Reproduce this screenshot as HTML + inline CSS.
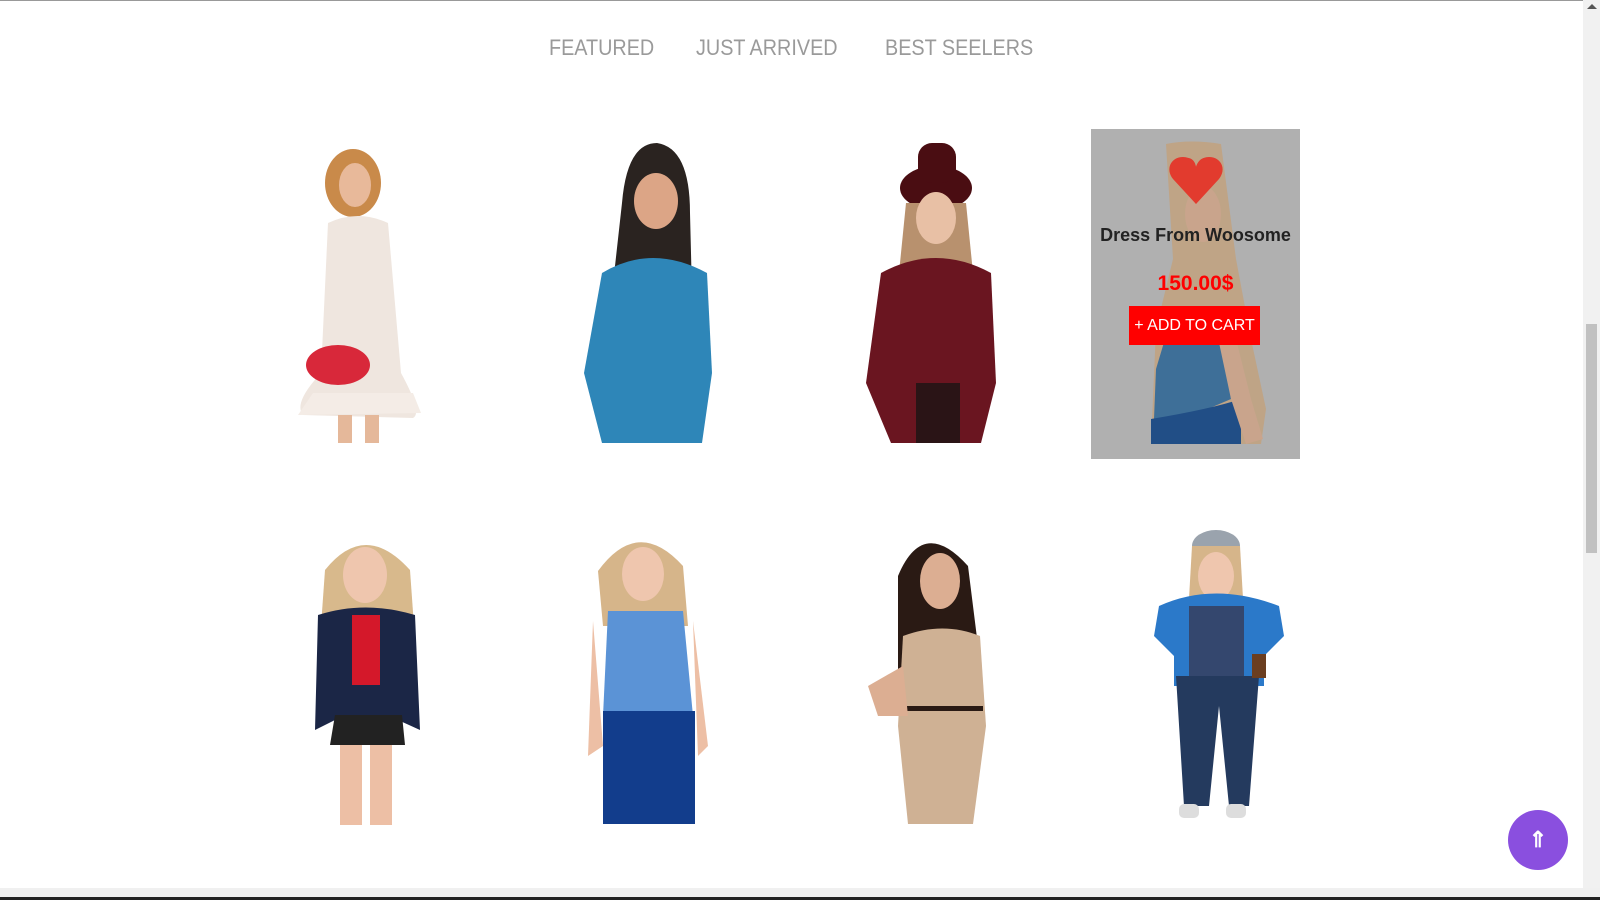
<!DOCTYPE html>
<html><head><meta charset="utf-8"><style>
html,body{margin:0;padding:0;width:1600px;height:900px;overflow:hidden;background:#fff;font-family:"Liberation Sans",sans-serif}
.top{position:absolute;left:0;top:0;width:1583px;height:1px;background:#999}
.tab{position:absolute;top:35px;font-size:22px;color:#9a9a9a;transform:scaleX(0.9);transform-origin:left top;white-space:nowrap}
.fig{position:absolute}
.card{position:absolute;left:1091px;top:129px;width:209px;height:330px;background:#b0b0b0;overflow:hidden}
.card svg{position:absolute;left:0;top:0}
.t{position:absolute;width:100%;text-align:center}
.sb{position:absolute;left:1583px;top:0;width:17px;height:888px;background:#f1f1f1}
.th{position:absolute;left:1586px;top:324px;width:11px;height:229px;background:#c1c1c1}
.hb{position:absolute;left:0;top:888px;width:1600px;height:9px;background:#f0f0f0}
.db{position:absolute;left:0;top:897px;width:1600px;height:3px;background:#222}
.up{position:absolute;left:1508px;top:810px;width:60px;height:60px;border-radius:50%;background:#8a4fdf;color:#fff;font-size:22px;text-align:center;line-height:60px;font-weight:bold}
</style></head><body>
<div class="top"></div>
<div class="tab" style="left:549px">FEATURED</div>
<div class="tab" style="left:696px">JUST ARRIVED</div>
<div class="tab" style="left:885px">BEST SEELERS</div>

<!-- row 1 -->
<svg class="fig" style="left:293px;top:143px" width="140" height="300">
<ellipse cx="60" cy="40" rx="28" ry="34" fill="#c98a4a"/><ellipse cx="62" cy="42" rx="16" ry="22" fill="#e8b99a"/>
<path d="M35 80 Q65 66 95 80 L108 230 Q130 270 120 275 L10 272 Q0 260 28 230 Z" fill="#efe6df"/>
<path d="M20 250 L120 250 L128 270 L5 272Z" fill="#f4ece6"/>
<ellipse cx="45" cy="222" rx="32" ry="20" fill="#d8283a"/>
<rect x="45" y="272" width="14" height="28" fill="#e5b89a"/><rect x="72" y="272" width="14" height="28" fill="#e5b89a"/>
</svg>
<svg class="fig" style="left:582px;top:143px" width="140" height="300">
<path d="M40 60 Q45 0 75 0 Q108 5 108 70 L110 150 L30 150Z" fill="#2a2320"/>
<ellipse cx="74" cy="58" rx="22" ry="28" fill="#dca586"/>
<path d="M20 130 Q70 100 125 130 L130 230 L120 300 L20 300 L2 230Z" fill="#2e86b8"/>
</svg>
<svg class="fig" style="left:866px;top:143px" width="140" height="300">
<ellipse cx="70" cy="45" rx="36" ry="22" fill="#4a0d12"/><rect x="52" y="0" width="38" height="40" rx="14" fill="#4a0d12"/>
<path d="M40 60 L100 60 L108 140 L32 140Z" fill="#b8916e"/><ellipse cx="70" cy="75" rx="20" ry="26" fill="#e8c0a5"/>
<path d="M15 130 Q70 100 125 130 L130 240 L115 300 L25 300 L0 240Z" fill="#6a1520"/>
<rect x="50" y="240" width="44" height="60" fill="#2a1416"/>
</svg>

<div class="card">
<svg width="209" height="330">
<path d="M75 15 Q100 10 130 15 L145 130 L160 210 L175 280 L170 315 L60 315 L65 200 L82 130Z" fill="#bfa486"/>
<ellipse cx="112" cy="85" rx="18" ry="28" fill="#c9a48c"/>
<path d="M80 190 Q100 175 130 190 L140 270 L70 300 L62 315 L65 240Z" fill="#3e6f98"/>
<path d="M60 290 Q120 280 150 270 L150 315 L60 315Z" fill="#214e86"/>
<path d="M123 190 L145 210 L160 270 L172 310 L155 315 L140 270Z" fill="#c9a48c"/>
<path d="M91 52 C77 26 108 20 105 44 C104 20 133 26 119 52 L105 75Z" fill="#e23b2e"/>
<path d="M105 75 L82 50 C74 40 80 28 92 28 C100 28 104 34 105 38 C106 34 110 28 118 28 C130 28 136 40 128 50 Z" fill="#e23b2e"/>
</svg>
<div class="t" style="top:96px;font-size:18px;font-weight:bold;color:#222">Dress From Woosome</div>
<div class="t" style="top:143px;font-size:21px;font-weight:bold;color:#f00">150.00$</div>
<div style="position:absolute;left:38px;top:177px;width:131px;height:39px;background:#f00;color:#fff;font-size:16px;line-height:39px;text-align:center">+ ADD TO CART</div>
</div>

<!-- row 2 -->
<svg class="fig" style="left:310px;top:530px" width="115" height="295">
<path d="M15 40 Q55 -10 100 40 L105 110 L10 110Z" fill="#d8b98c"/><ellipse cx="55" cy="45" rx="22" ry="28" fill="#efc6ae"/>
<path d="M8 85 Q55 70 105 85 L110 200 L88 190 L25 190 L5 200Z" fill="#1b2646"/>
<rect x="42" y="85" width="28" height="70" fill="#d4182a"/>
<path d="M25 185 L92 185 L95 215 L20 215Z" fill="#222"/>
<rect x="30" y="215" width="22" height="80" fill="#edbfa5"/><rect x="60" y="215" width="22" height="80" fill="#edbfa5"/>
</svg>
<svg class="fig" style="left:583px;top:526px" width="135" height="298">
<path d="M15 45 Q55 -10 100 40 L105 100 L20 100Z" fill="#d6b58a"/><ellipse cx="60" cy="48" rx="21" ry="27" fill="#efc6ae"/>
<path d="M10 95 L20 220 L5 230 Z" fill="#edbfa5"/><path d="M110 95 L125 220 L115 230Z" fill="#edbfa5"/>
<path d="M25 85 L100 85 L110 190 L20 190Z" fill="#5b93d6"/>
<path d="M20 185 L112 185 L112 298 L20 298Z" fill="#123d8c"/>
</svg>
<svg class="fig" style="left:868px;top:526px" width="135" height="298">
<path d="M30 50 Q55 -10 100 40 L115 160 L30 160Z" fill="#2a1a14"/><ellipse cx="72" cy="55" rx="20" ry="28" fill="#dcae92"/>
<path d="M35 110 Q75 95 112 110 L118 200 L105 298 L40 298 L30 200Z" fill="#cfb194"/>
<rect x="35" y="180" width="80" height="5" fill="#2a1a14"/>
<path d="M0 160 L35 140 L40 190 L10 190Z" fill="#dcae92"/>
</svg>
<svg class="fig" style="left:1154px;top:526px" width="130" height="298">
<ellipse cx="62" cy="20" rx="24" ry="16" fill="#9aa3ad"/><path d="M38 20 L86 20 L90 90 L34 90Z" fill="#d6b58a"/>
<ellipse cx="62" cy="50" rx="18" ry="24" fill="#efc6ae"/>
<path d="M5 80 Q60 55 125 80 L130 110 L110 130 L110 160 L20 160 L20 130 L0 110Z" fill="#2b79c9"/>
<rect x="35" y="80" width="55" height="75" fill="#34476e"/>
<path d="M22 150 L105 150 L95 280 L75 280 L65 180 L55 280 L30 280Z" fill="#243a5e"/>
<rect x="25" y="278" width="20" height="14" rx="5" fill="#ddd"/><rect x="72" y="278" width="20" height="14" rx="5" fill="#ddd"/>
<rect x="98" y="128" width="14" height="24" fill="#6b3e20"/>
</svg>

<div class="sb"></div><div class="th"></div>
<div style="position:absolute;left:1587px;top:4px;width:0;height:0;border-left:5px solid transparent;border-right:5px solid transparent;border-bottom:5px solid #555"></div>
<div style="position:absolute;left:1587px;top:889px;width:0;height:0;border-left:5px solid transparent;border-right:5px solid transparent;border-top:5px solid #555"></div>
<div class="hb"></div><div class="db"></div>
<div class="up">⇑</div>
</body></html>
